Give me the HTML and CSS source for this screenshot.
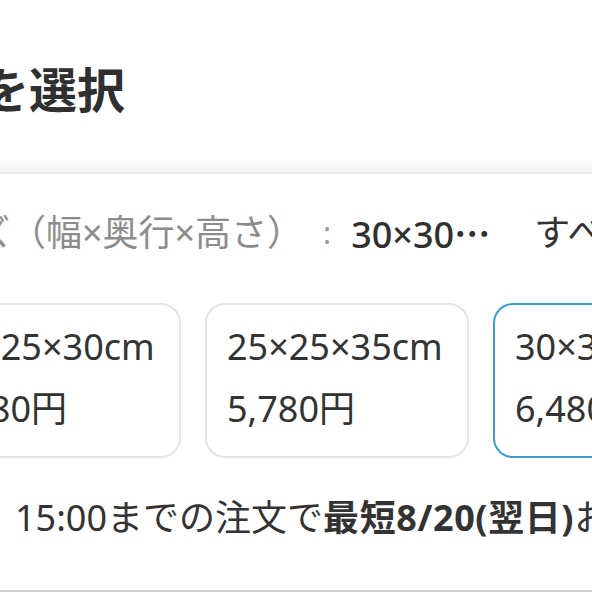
FILE: index.html
```html
<!DOCTYPE html>
<html lang="ja">
<head>
<meta charset="utf-8">
<title>サイズを選択</title>
<link rel="stylesheet" href="styles.css">
</head>
<body>
<div class="page">
  <header class="head">
    <h1 class="title">サイズを選択</h1>
  </header>
  <div class="band"></div>
  <section class="sizes">
    <div class="sel">
      <span class="label">サイズ（幅×奥行×高さ）</span><span class="colon">:</span>
      <span class="value">30×30<span class="dots">…</span></span>
      <span class="all">すべて見る</span>
    </div>
    <div class="cards">
      <div class="card">
        <div class="dim">25×25×30cm</div>
        <div class="price">4,980円</div>
      </div>
      <div class="card">
        <div class="dim">25×25×35cm</div>
        <div class="price">5,780円</div>
      </div>
      <div class="card card-on">
        <div class="dim">30×30×30cm</div>
        <div class="price">6,480円</div>
      </div>
    </div>
    <p class="ship">15:00までの注文で<b class="strong">最短8/20(翌日)</b>お届け</p>
  </section>
  <div class="rule"></div>
</div>
</body>
</html>
```
FILE: styles.css
```css
html, body {
  margin: 0;
  padding: 0;
  background: #ffffff;
}
body {
  width: 592px;
  height: 592px;
  overflow: hidden;
  font-family: "Noto Sans", "Noto Sans CJK JP", sans-serif;
  color: #333333;
}
.page {
  width: 592px;
  height: 592px;
  display: flex;
  flex-direction: column;
  overflow: hidden;
  white-space: nowrap;
}
.head {
  height: 160px;
  box-sizing: border-box;
  padding-top: 60px;
}
.title {
  margin: 0 0 0 -161.5px;
  font-size: 48px;
  line-height: 60px;
  font-weight: 700;
  color: #303030;
}
.band {
  height: 12px;
  background: linear-gradient(#fbfbfb, #f2f2f2);
  border-bottom: 2px solid #ebebeb;
  flex: none;
}
.sizes {
  padding-top: 29px;
  display: flex;
  flex-direction: column;
}
.sel {
  display: flex;
  align-items: center;
  height: 60px;
  font-size: 36px;
  line-height: 60px;
  margin-left: -97px;
}
.label {
  color: #8c8c8c;
}
.colon {
  margin-left: 20px;
  color: #9a9a9a;
  font-size: 30px;
}
.value {
  margin-left: 20px;
  font-weight: 500;
  color: #303030;
}
.dots {
  font-family: "Noto Sans CJK JP", sans-serif;
  font-weight: 700;
}
.all {
  margin-left: 44px;
  color: #333333;
}
.cards {
  display: flex;
  gap: 24px;
  margin-top: 40px;
  margin-left: -83px;
}
.card {
  flex: none;
  width: 264px;
  height: 155px;
  box-sizing: border-box;
  border: 2px solid #e6e6e6;
  border-radius: 20px;
  padding: 20px 0 0 20px;
  display: flex;
  flex-direction: column;
  gap: 18px;
  font-size: 36px;
  line-height: 44px;
  color: #333333;
}
.card-on {
  border-color: #3f9ccf;
}
.ship {
  margin: 35px 0 0 15px;
  font-size: 36px;
  line-height: 50px;
  color: #333333;
}
.strong {
  font-weight: 700;
  letter-spacing: 0.6px;
}
.rule {
  margin-top: auto;
  height: 2px;
  background: #cfcfcf;
  flex: none;
}
```
